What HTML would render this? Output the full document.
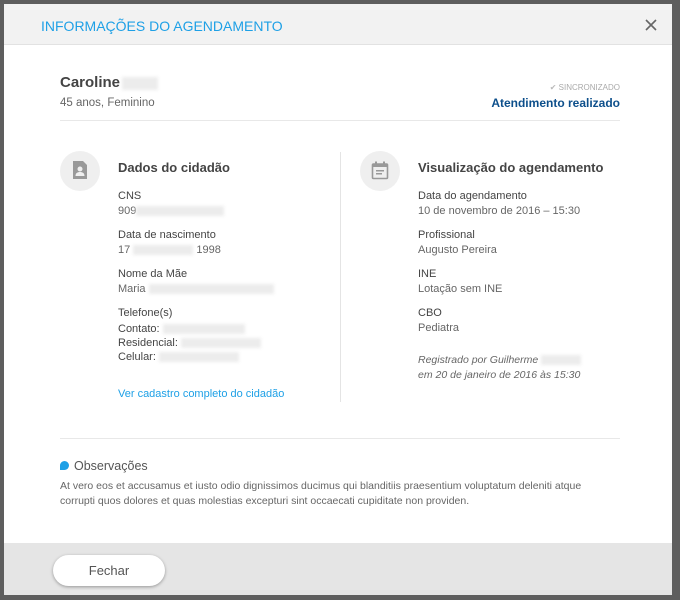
<!DOCTYPE html>
<html><head><meta charset="utf-8"><style>
*{margin:0;padding:0;box-sizing:border-box}
body{width:680px;height:600px;background:#5e5e5e;font-family:"Liberation Sans",sans-serif;position:relative;overflow:hidden;color:#555}
.m{position:absolute;left:4px;top:4px;width:668px;height:591px;background:#fff}
.hd{position:absolute;left:0;top:0;width:668px;height:41px;background:#f2f2f2;border-bottom:1px solid #e2e2e2}
.ft{position:absolute;left:0;top:539px;width:668px;height:52px;background:#e5e5e5}
.a{position:absolute;white-space:nowrap}
.b{background:#ececec;filter:blur(1.5px);display:inline-block;height:10px;vertical-align:middle}
.lbl{font-size:11px;color:#444}
.val{font-size:11px;color:#666}
.circ{position:absolute;width:40px;height:40px;border-radius:50%;background:#efefef}
</style></head><body>
<div class="m">
<div class="hd"></div>
<div class="a" style="left:37px;top:14px;font-size:14px;color:#1ea0e6">INFORMAÇÕES DO AGENDAMENTO</div>
<svg class="a" style="left:641px;top:15px" width="12" height="12" viewBox="0 0 12 12"><path d="M1 1L11 11M11 1L1 11" stroke="#666" stroke-width="1.6"/></svg>
<div class="a" style="left:56px;top:70px;font-size:15px;font-weight:bold;color:#444">Caroline<span class="b" style="width:36px;height:13px;margin-left:2px"></span></div>
<div class="a" style="left:56px;top:93px;font-size:11.5px;color:#666">45 anos, Feminino</div>
<div class="a" style="right:52px;top:79px;font-size:8px;color:#aaa"><span style="color:#bbb">✔</span> SINCRONIZADO</div>
<div class="a" style="right:52px;top:92px;font-size:12px;font-weight:bold;color:#0d4f8b">Atendimento realizado</div>
<div class="a" style="left:56px;top:116px;width:560px;height:1px;background:#e8e8e8"></div>

<div class="circ" style="left:56px;top:147px"></div>
<svg class="a" style="left:68px;top:156px" width="16" height="20" viewBox="0 0 16 20"><path d="M1 1h10l4 4v14H1z" fill="#999"/><circle cx="8" cy="9" r="2.5" fill="#efefef"/><path d="M3.5 16c0-3 2-4 4.5-4s4.5 1 4.5 4z" fill="#efefef"/></svg>
<div class="a" style="left:114px;top:156px;font-size:13px;font-weight:bold;color:#444">Dados do cidadão</div>
<div class="a lbl" style="left:114px;top:186px">CNS</div>
<div class="a val" style="left:114px;top:201px">909<span class="b" style="width:88px"></span></div>
<div class="a lbl" style="left:114px;top:225px">Data de nascimento</div>
<div class="a val" style="left:114px;top:240px">17 <span class="b" style="width:60px"></span> 1998</div>
<div class="a lbl" style="left:114px;top:264px">Nome da Mãe</div>
<div class="a val" style="left:114px;top:279px">Maria <span class="b" style="width:125px"></span></div>
<div class="a lbl" style="left:114px;top:303px">Telefone(s)</div>
<div class="a lbl" style="left:114px;top:318px;line-height:14px">Contato: <span class="b" style="width:82px"></span><br>Residencial: <span class="b" style="width:80px"></span><br>Celular: <span class="b" style="width:80px"></span></div>
<div class="a" style="left:114px;top:384px;font-size:11px;color:#1ea0e6">Ver cadastro completo do cidadão</div>

<div class="a" style="left:336px;top:148px;width:1px;height:250px;background:#e4e4e4"></div>

<div class="circ" style="left:356px;top:147px"></div>
<svg class="a" style="left:367px;top:157px" width="18" height="19" viewBox="0 0 18 19"><rect x="1.5" y="3" width="15" height="14.5" rx="1" fill="none" stroke="#999" stroke-width="1.6"/><rect x="1.5" y="3" width="15" height="3" fill="#999"/><rect x="4" y="0.5" width="2" height="3" fill="#999"/><rect x="12" y="0.5" width="2" height="3" fill="#999"/><rect x="5" y="9" width="8" height="1.5" fill="#999"/><rect x="5" y="12" width="6" height="1.5" fill="#999"/></svg>
<div class="a" style="left:414px;top:156px;font-size:13px;font-weight:bold;color:#444">Visualização do agendamento</div>
<div class="a lbl" style="left:414px;top:186px">Data do agendamento</div>
<div class="a val" style="left:414px;top:201px">10 de novembro de 2016 – 15:30</div>
<div class="a lbl" style="left:414px;top:225px">Profissional</div>
<div class="a val" style="left:414px;top:240px">Augusto Pereira</div>
<div class="a lbl" style="left:414px;top:264px">INE</div>
<div class="a val" style="left:414px;top:279px">Lotação sem INE</div>
<div class="a lbl" style="left:414px;top:303px">CBO</div>
<div class="a val" style="left:414px;top:318px">Pediatra</div>
<div class="a" style="left:414px;top:349px;font-size:10.5px;font-style:italic;color:#666;line-height:15px">Registrado por Guilherme <span class="b" style="width:40px"></span><br>em 20 de janeiro de 2016 às 15:30</div>

<div class="a" style="left:56px;top:434px;width:560px;height:1px;background:#e8e8e8"></div>
<div class="a" style="left:56px;top:457px;width:9px;height:9px;border-radius:50% 50% 50% 0;background:#1ea0e6"></div>
<div class="a" style="left:70px;top:455px;font-size:12.5px;color:#555">Observações</div>
<div class="a" style="left:56px;top:475px;font-size:10.5px;color:#666;line-height:15px">At vero eos et accusamus et iusto odio dignissimos ducimus qui blanditiis praesentium voluptatum deleniti atque<br>corrupti quos dolores et quas molestias excepturi sint occaecati cupiditate non providen.</div>

<div class="ft"></div>
<div class="a" style="left:49px;top:551px;width:112px;height:31px;border-radius:16px;background:#fff;box-shadow:0 1px 3px rgba(0,0,0,.35);text-align:center;line-height:31px;font-size:13px;color:#555">Fechar</div>
</div>
</body></html>
